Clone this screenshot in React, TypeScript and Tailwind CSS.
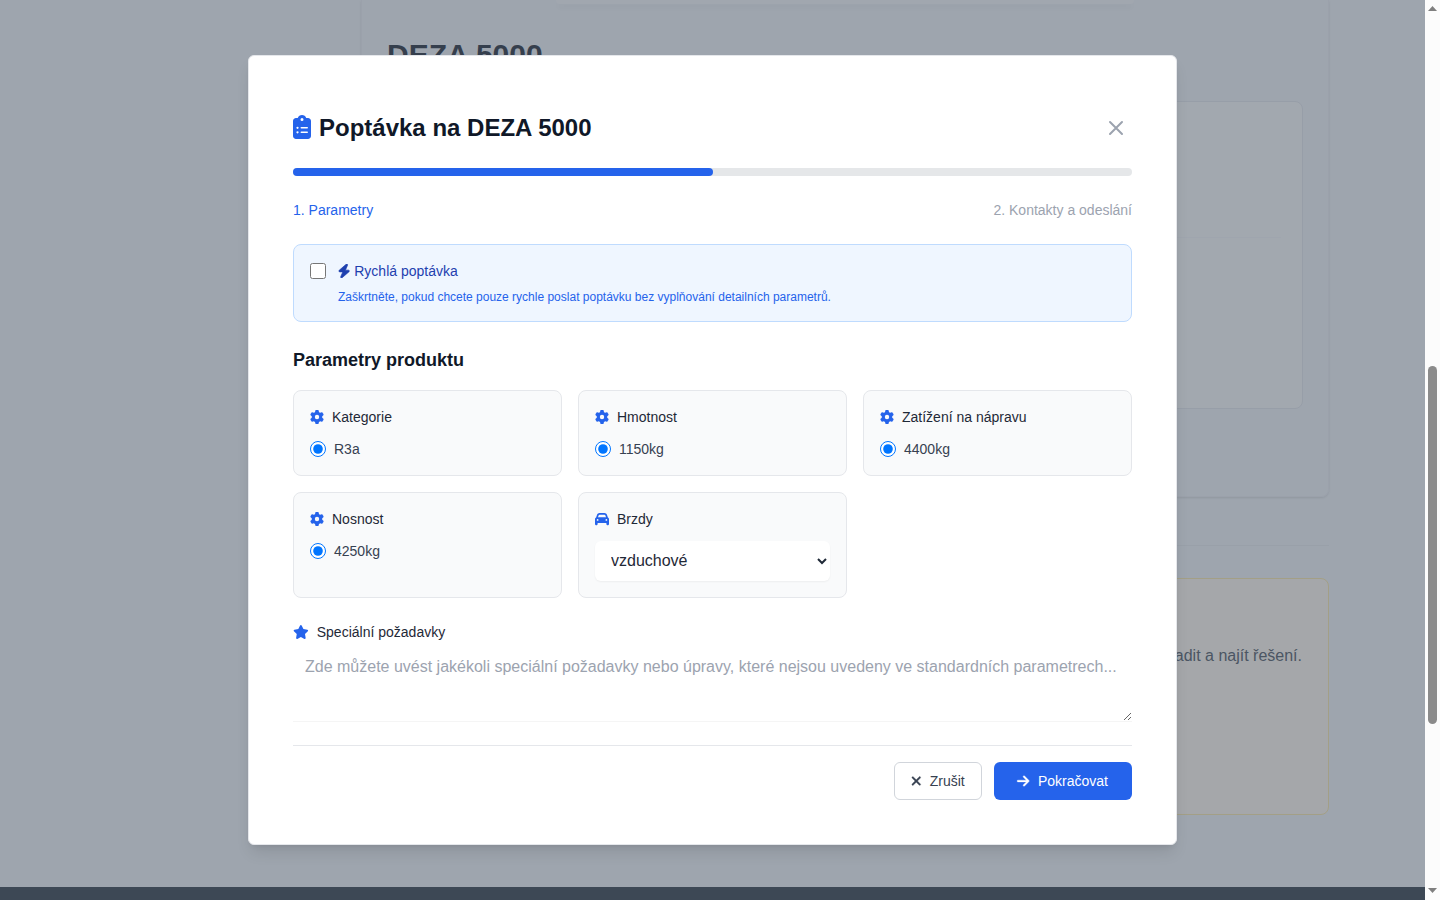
import React, { useState } from 'react';
import { FaArrowRight, FaBolt, FaCar, FaClipboardList, FaGear, FaStar, FaXmark } from 'react-icons/fa6';

const parameters = [
    { name: 'Kategorie', value: 'R3a' },
    { name: 'Hmotnost', value: '1150kg' },
    { name: 'Zatížení na nápravu', value: '4400kg' },
    { name: 'Nosnost', value: '4250kg' }
];

const App: React.FC = () => (
    <div className="flex h-[900px] w-[1440px] overflow-hidden bg-white font-['Liberation_Sans',Arial,sans-serif]">
        <div className="relative h-full flex-1 overflow-hidden">
            <ProductPage />
            <div className="absolute inset-0 bg-[#4b5563]/50 pt-[55px]">
                <InquiryModal />
            </div>
        </div>
        <Scrollbar />
    </div>
);

const ProductPage = () => (
    <div className="flex h-full flex-col bg-[#f1f5f9]">
        <div className="ml-[361px] w-[968px]">
            <div className="h-[497px] rounded-b-lg border-x border-b border-[#eaedf3] px-[25px] shadow-sm">
                <div className="mx-auto h-1 w-[578px] rounded-b-lg bg-[#f7f8fb] shadow-md"></div>
                <h1 className="mt-[33px] text-3xl font-bold text-[#1f2937]">DEZA 5000</h1>
                <div className="mt-7 h-[308px] rounded-lg border border-[#e2e6ec] bg-[#f9fafb] px-[21px] pt-[135px]">
                    <div className="border-t border-[#f3f5f8]"></div>
                </div>
            </div>
            <div className="mt-12 border-t border-[#e6eaef] pt-8">
                <div className="h-[237px] rounded-lg border border-[#fbe9a8] bg-[#fef9f0] px-[26px] pt-[65px] text-right text-[#4b5563]">
                    Kontaktujte nás, rádi vám pomůžeme poradit a najít řešení.
                </div>
            </div>
        </div>
        <footer className="mt-[72px] flex-1 bg-[#2f3b47]"></footer>
    </div>
);

const InquiryModal = () => {
    const [quick, setQuick] = useState(false);
    const [note, setNote] = useState('');

    return (
        <div className="mx-auto h-[790px] w-[929px] rounded-md border border-gray-200 bg-white p-11 shadow-lg">
            {/* Header */}
            <div className="mt-3 mb-6 flex items-center justify-between">
                <h3 className="flex items-center text-2xl font-bold text-gray-900">
                    <FaClipboardList className="mr-2 mb-0.5 h-6 w-[18px] text-[#2563eb]" />
                    Poptávka na DEZA 5000
                </h3>
                <button className="mr-1 text-[#9ca3af]" aria-label="Zavřít">
                    <svg className="h-6 w-6" fill="none" stroke="currentColor" viewBox="0 0 24 24">
                        <path strokeLinecap="round" strokeLinejoin="round" strokeWidth={2} d="M6 18L18 6M6 6l12 12" />
                    </svg>
                </button>
            </div>

            {/* Steps */}
            <div className="h-2 rounded-full bg-[#e5e7e9]">
                <div className="h-2 w-1/2 rounded-full bg-[#2563eb]"></div>
            </div>
            <div className="my-6 flex justify-between text-sm">
                <span className="text-[#2563eb]">1. Parametry</span>
                <span className="text-[#9ca3af]">2. Kontakty a odeslání</span>
            </div>

            <label className="flex items-start gap-3 rounded-lg border border-[#bfdbfe] bg-[#eff6ff] p-4">
                <input
                    type="checkbox"
                    checked={quick}
                    onChange={() => setQuick(!quick)}
                    className="mt-0.5 h-4 w-4"
                />
                <span>
                    <span className="flex items-center text-sm text-[#1e40af]">
                        <FaBolt className="mr-1 h-3.5 w-[12.25px] stroke-[24px]" />
                        Rychlá poptávka
                    </span>
                    <span className="mt-2 block text-xs text-[#2563eb]">
                        Zaškrtněte, pokud chcete pouze rychle poslat poptávku bez vyplňování detailních parametrů.
                    </span>
                </span>
            </label>

            {/* Parameters */}
            <h4 className="mt-6 mb-4 text-lg font-bold text-gray-900">Parametry produktu</h4>
            <div className="grid grid-cols-3 gap-4">
                {parameters.map((item) => (
                    <ParameterCard key={item.name} title={item.name} icon={<FaGear />}>
                        <label className="flex items-center text-sm text-[#374151]">
                            <input type="radio" name={item.name} defaultChecked className="mr-2 h-4 w-4" />
                            {item.value}
                        </label>
                    </ParameterCard>
                ))}
                <ParameterCard title="Brzdy" icon={<FaCar />}>
                    <select className="block h-10 w-full rounded-md bg-white px-3 pt-[7px] pb-[9px] text-base text-[#1f2937] shadow-xs">
                        <option>vzduchové</option>
                    </select>
                </ParameterCard>
            </div>

            <label className="mt-6 mb-2 flex items-center text-sm text-[#1f2937]">
                <FaStar className="mr-2 h-3.5 w-[15.75px] text-[#2563eb]" />
                Speciální požadavky
            </label>
            <textarea
                value={note}
                onChange={(e) => setNote(e.target.value)}
                placeholder="Zde můžete uvést jakékoli speciální požadavky nebo úpravy, které nejsou uvedeny ve standardních parametrech..."
                className="block h-[71px] w-full px-3 py-2 text-base leading-[18px] shadow-[0_1px_0_rgba(0,0,0,0.04)] placeholder:text-[#9ca3af]"
            />

            {/* Footer */}
            <div className="mt-6 flex justify-end gap-3 border-t border-gray-200 pt-4 text-sm">
                <button className="flex items-center rounded-md border border-[#d1d5db] bg-white px-4 py-2 text-[#374151]">
                    <FaXmark className="mr-2 mb-px h-3.5 w-[10.5px] stroke-[12px]" />
                    Zrušit
                </button>
                <button className="flex items-center rounded-md bg-[#2563eb] px-6 text-white">
                    <FaArrowRight className="mr-[8.5px] -ml-[0.5px] h-3.5 w-[12.25px] overflow-visible stroke-[12px]" />
                    Pokračovat
                </button>
            </div>
        </div>
    );
};

const ParameterCard = ({ title, icon, children }: { title: string, icon: React.ReactNode, children: React.ReactNode }) => (
    <div className="rounded-lg border border-gray-200 bg-gray-50 p-4">
        <div className="mb-3 flex items-center text-sm text-[#1f2937]">
            <span className="mr-2 text-[#2563eb]">{icon}</span>
            {title}
        </div>
        {children}
    </div>
);

const Scrollbar = () => (
    <div className="flex w-[15px] flex-col items-center bg-[#fcfcfc]">
        <svg className="mt-1.5 h-[5px] w-[9px]" viewBox="0 0 9 5" fill="#7f7f7f">
            <path d="M4.5 0L9 5H0z" />
        </svg>
        <div className="mt-[355px] h-[358px] w-[9px] rounded-full bg-[#8b8b8b]"></div>
        <svg className="mt-[164px] h-[5px] w-[9px]" viewBox="0 0 9 5" fill="#7f7f7f">
            <path d="M0 0h9L4.5 5z" />
        </svg>
    </div>
);

export default App;
